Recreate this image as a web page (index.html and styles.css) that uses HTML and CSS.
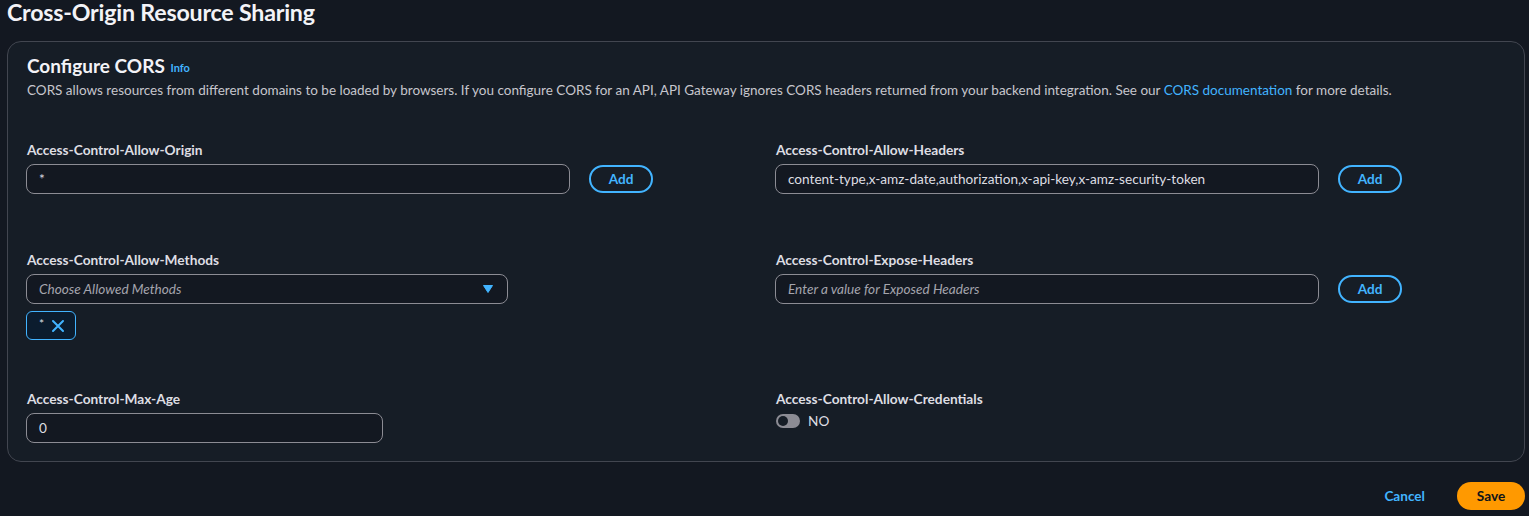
FILE: index.html
```html
<!DOCTYPE html>
<html lang="en">
<head>
<meta charset="utf-8">
<title>Cross-Origin Resource Sharing</title>
<link rel="stylesheet" href="styles.css">
</head>
<body>
<div class="page">
  <h1 class="title">Cross-Origin Resource Sharing</h1>
  <section class="card">
    <div class="card-header">
      <h2 class="card-title">Configure CORS <a class="info" href="#">Info</a></h2>
      <p class="desc">CORS allows resources from different domains to be loaded by browsers. If you configure CORS for an API, API Gateway ignores CORS headers returned from your backend integration. See our <a class="link" href="#">CORS documentation</a> for more details.</p>
    </div>

    <div class="row row-1">
      <div class="field">
        <div class="label">Access-Control-Allow-Origin</div>
        <div class="input-line">
          <div class="input w-main">*</div>
          <button class="btn-add">Add</button>
        </div>
      </div>
      <div class="field">
        <div class="label">Access-Control-Allow-Headers</div>
        <div class="input-line">
          <div class="input w-main">content-type,x-amz-date,authorization,x-api-key,x-amz-security-token</div>
          <button class="btn-add">Add</button>
        </div>
      </div>
    </div>

    <div class="row row-2">
      <div class="field">
        <div class="label">Access-Control-Allow-Methods</div>
        <div class="input select w-select">
          <span class="placeholder">Choose Allowed Methods</span>
          <svg class="caret" width="10" height="8" viewBox="0 0 10 8"><path d="M0.5 0.5 H9.5 L5 7.5 Z" fill="#42b4ff" stroke="#42b4ff" stroke-linejoin="round"/></svg>
        </div>
        <div class="token">
          <span class="token-text">*</span>
          <svg class="token-x" width="14" height="14" viewBox="0 0 14 14"><path d="M2 2 L12 12 M12 2 L2 12" stroke="#42b4ff" stroke-width="2" stroke-linecap="round"/></svg>
        </div>
      </div>
      <div class="field">
        <div class="label">Access-Control-Expose-Headers</div>
        <div class="input-line">
          <div class="input w-main"><span class="placeholder">Enter a value for Exposed Headers</span></div>
          <button class="btn-add">Add</button>
        </div>
      </div>
    </div>

    <div class="row row-3">
      <div class="field">
        <div class="label">Access-Control-Max-Age</div>
        <div class="input w-age">0</div>
      </div>
      <div class="field">
        <div class="label">Access-Control-Allow-Credentials</div>
        <div class="toggle-line">
          <span class="toggle"><span class="knob"></span></span>
          <span class="toggle-text">NO</span>
        </div>
      </div>
    </div>
  </section>

  <div class="actions">
    <button class="btn-cancel">Cancel</button>
    <button class="btn-save">Save</button>
  </div>
</div>
</body>
</html>
```

FILE: styles.css
```css
html, body {
  margin: 0;
  padding: 0;
  background: #131821;
  height: 100%;
  overflow: hidden;
}
body {
  font-family: Lato, "Open Sans", Arial, sans-serif;
  color: #dedee3;
}
.page {
  padding: 0 4px 0 7px;
}
.title {
  margin: 0;
  font-size: 23.2px;
  line-height: 25px;
  font-weight: 700;
  color: #f3f3f7;
  height: 41px;
  letter-spacing: -0.2px;
}
.card {
  background: #161d26;
  border: 1px solid #424650;
  border-radius: 14px;
  padding: 12px 19px 18px 19px;
}
.card-title {
  margin: 0;
  font-size: 19px;
  line-height: 24px;
  font-weight: 700;
  color: #f3f3f7;
}
.info {
  font-size: 11px;
  color: #42b4ff;
  text-decoration: none;
  font-weight: 700;
  margin-left: 1px;
  vertical-align: 1px;
}
.desc {
  margin: 1px 0 0 0;
  font-size: 13.5px;
  line-height: 18px;
  color: #c6c6cd;
}
.link {
  color: #42b4ff;
  text-decoration: none;
}
.row {
  display: grid;
  grid-template-columns: 1fr 1fr;
  column-gap: 20px;
}
.row-1 { margin-top: 41px; }
.row-2 { margin-top: 56px; }
.row-3 { margin-top: 49px; }
.label {
  font-size: 13.7px;
  line-height: 20px;
  font-weight: 700;
  color: #dedee3;
  margin-bottom: 4px;
}
.input-line {
  display: flex;
  align-items: center;
  gap: 19px;
}
.input {
  box-sizing: border-box;
  height: 30px;
  border: 1px solid #8c8c94;
  border-radius: 8px;
  padding: 0 12px;
  display: flex;
  align-items: center;
  font-size: 13.6px;
  color: #dedee3;
  background: #131821;
  white-space: nowrap;
  overflow: hidden;
  margin-left: -1px;
}
.w-main { width: 544px; }
.w-select { width: 482px; }
.w-age { width: 357px; }
.placeholder {
  font-style: italic;
  color: #a4a4ad;
}
.select {
  justify-content: space-between;
  padding-right: 14px;
}
.caret { display: block; }
.btn-add {
  box-sizing: border-box;
  width: 64px;
  height: 28px;
  border: 2px solid #42b4ff;
  border-radius: 16px;
  background: transparent;
  color: #42b4ff;
  font-family: inherit;
  font-size: 13.6px;
  font-weight: 700;
  padding: 0;
  cursor: pointer;
}
.token {
  box-sizing: border-box;
  margin-top: 7px;
  margin-left: -1px;
  width: 50px;
  height: 29px;
  border: 1px solid #42b4ff;
  border-radius: 6px;
  background: #0b1c2e;
  display: flex;
  align-items: center;
  padding-left: 12px;
  gap: 7px;
}
.token-text {
  font-size: 12px;
  color: #dedee3;
  line-height: 1;
  margin-top: -3px;
}
.token-x { display: block; }
.toggle-line {
  display: flex;
  align-items: center;
  gap: 8px;
  margin-top: 2px;
}
.toggle {
  box-sizing: border-box;
  width: 24px;
  height: 14px;
  border-radius: 7px;
  background: #8c8c94;
  display: flex;
  align-items: center;
  padding-left: 2px;
}
.knob {
  width: 10px;
  height: 10px;
  border-radius: 50%;
  background: #161d26;
}
.toggle-text {
  font-size: 13.6px;
  color: #dedee3;
}
.actions {
  display: flex;
  justify-content: flex-end;
  align-items: center;
  gap: 32px;
  margin-top: 20px;
}
.btn-cancel {
  background: transparent;
  border: none;
  color: #42b4ff;
  font-family: inherit;
  font-size: 13.6px;
  font-weight: 700;
  padding: 0;
}
.btn-save {
  box-sizing: border-box;
  width: 68px;
  height: 28px;
  border: none;
  border-radius: 14px;
  background: #ff9900;
  color: #0f141a;
  font-family: inherit;
  font-size: 13.6px;
  font-weight: 700;
  padding: 0;
}
```
